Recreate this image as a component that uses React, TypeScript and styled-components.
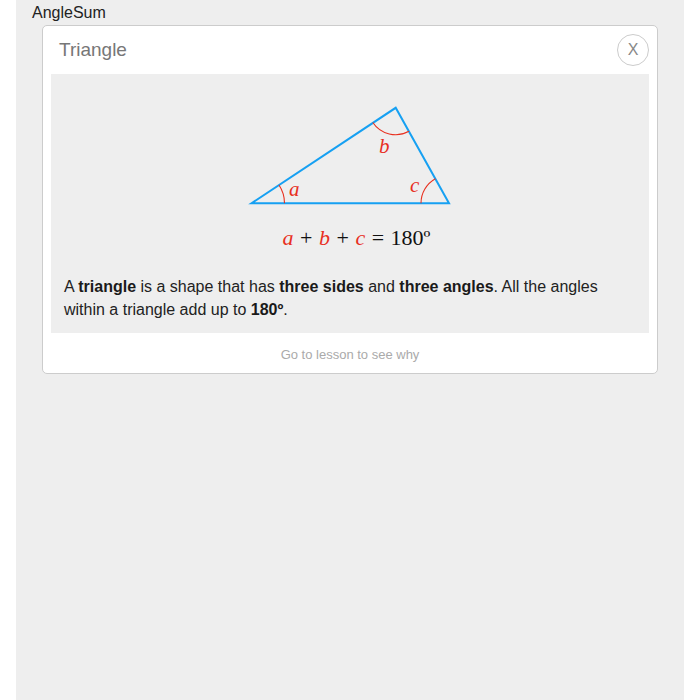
import React from "react";
import styled, { createGlobalStyle } from "styled-components";

const Global = createGlobalStyle`
  html, body { margin: 0; padding: 0; background: #fff; }
  body { font-family: "Liberation Sans", Arial, sans-serif; }
`;

const Column = styled.div`
  margin: 0 16px;
  min-height: 700px;
  background: #eeeeee;
  padding: 0 16px;
  box-sizing: border-box;
`;

const AppTitle = styled.div`
  font-size: 16px;
  line-height: 25px;
  color: #222;
`;

const Card = styled.div`
  margin: 0 10px;
  background: #fff;
  border: 1px solid #cccccc;
  border-radius: 5px;
  padding: 0 8px;
`;

const Header = styled.div`
  display: flex;
  align-items: center;
  justify-content: space-between;
  padding: 8px 0;
`;

const CardTitle = styled.div`
  padding-left: 8px;
  font-size: 19px;
  color: #777;
`;

const CloseButton = styled.button`
  width: 32px;
  height: 32px;
  border-radius: 50%;
  border: 1px solid #cccccc;
  background: #fff;
  color: #888;
  font-family: "Liberation Sans", Arial, sans-serif;
  font-size: 16px;
  padding: 0;
  display: flex;
  align-items: center;
  justify-content: center;
`;

const Body = styled.div`
  background: #eeeeee;
  padding: 0 13px 12px;
`;

const Figure = styled.svg`
  display: block;
  margin: 0 auto;
`;

const Formula = styled.div`
  font-family: "Liberation Serif", "Times New Roman", serif;
  font-size: 22px;
  line-height: 30px;
  text-align: center;
  padding-left: 13px;
  word-spacing: 1px;
  color: #111;
  margin-bottom: 22px;
`;

const Var = styled.i`
  color: #e8301f;
`;

const Text = styled.p`
  margin: 0;
  font-size: 16px;
  line-height: 1.45;
  color: #222;
  b { color: #1a1a1a; }
`;

const Footer = styled.div`
  padding: 14px 0 11px;
  font-size: 13px;
  line-height: 15px;
  text-align: center;
  color: #aaa;
`;

const BLUE = "#16a0f2";
const RED = "#e8301f";

export default function App() {
  return (
    <>
      <Global />
      <Column>
        <AppTitle>AngleSum</AppTitle>
        <Card>
          <Header>
            <CardTitle>Triangle</CardTitle>
            <CloseButton>X</CloseButton>
          </Header>
          <Body>
            <Figure width="220" height="149" viewBox="240 74 220 149">
              <polygon
                points="251.5,203.3 395.7,107.8 449,203.3"
                fill="none"
                stroke={BLUE}
                strokeWidth="2"
                strokeLinejoin="miter"
              />
              <path d="M 279 185 A 33 33 0 0 1 284.5 203.3" fill="none" stroke={RED} strokeWidth="1.1" />
              <path d="M 372.8 122.5 A 27.5 27.5 0 0 0 409 131.3" fill="none" stroke={RED} strokeWidth="1.1" />
              <path d="M 435.4 178.8 A 28 28 0 0 0 421 203.3" fill="none" stroke={RED} strokeWidth="1.1" />
              <g fontFamily="'Liberation Serif', 'Times New Roman', serif" fontStyle="italic" fontSize="21" fill={RED}>
                <text x="289" y="196">a</text>
                <text x="379" y="153">b</text>
                <text x="410" y="192">c</text>
              </g>
            </Figure>
            <Formula>
              <Var>a</Var> + <Var>b</Var> + <Var>c</Var> = 180º
            </Formula>
            <Text>
              A <b>triangle</b> is a shape that has <b>three sides</b> and <b>three angles</b>. All the angles within a triangle add up to <b>180º</b>.
            </Text>
          </Body>
          <Footer>Go to lesson to see why</Footer>
        </Card>
      </Column>
    </>
  );
}
